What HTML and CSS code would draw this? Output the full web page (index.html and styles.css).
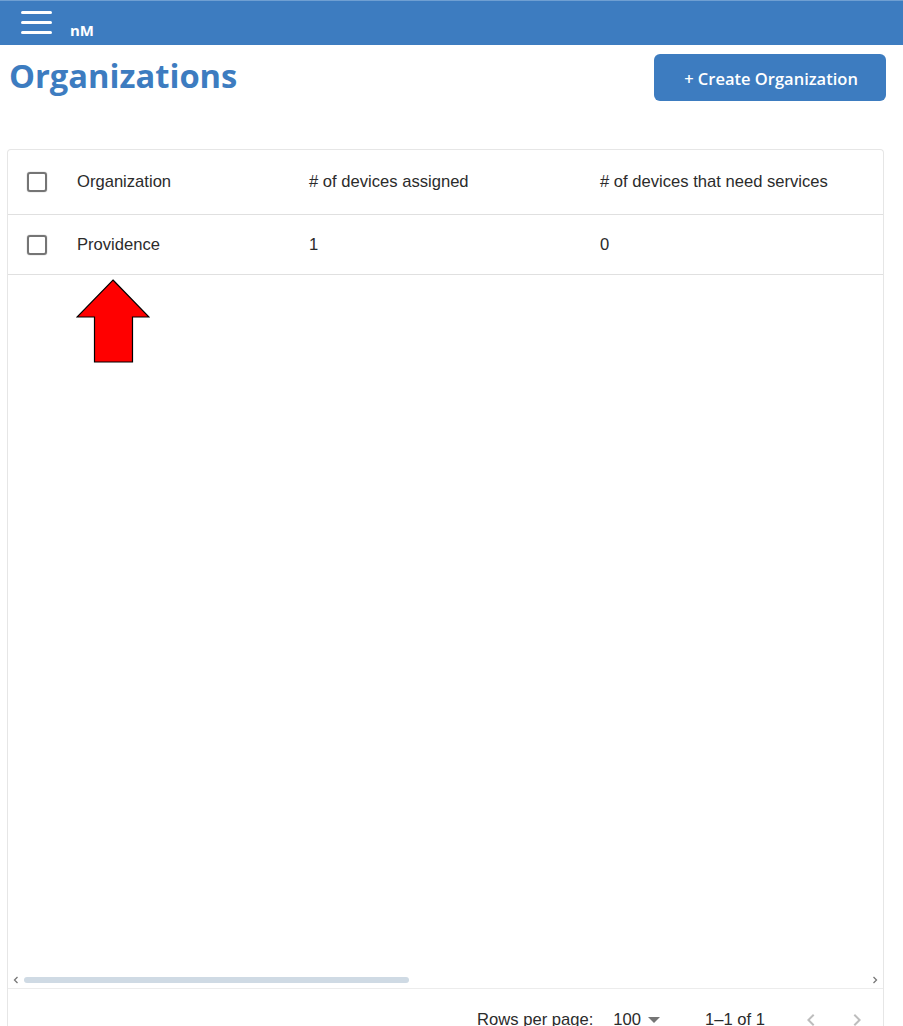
FILE: index.html
```html
<!DOCTYPE html>
<html lang="en">
<head>
  <meta charset="UTF-8" />
  <meta name="viewport" content="width=device-width, initial-scale=1.0"/>
  <title>Organizations</title>
  <link rel="stylesheet" href="styles.css">
</head>
<body>

  <!-- Top bar -->
  <header class="topbar">
    <div class="menu-icon">
      <span></span>
      <span></span>
      <span></span>
    </div>
    <div class="brand">nM</div>
  </header>

  <!-- Title row -->
  <div class="title-row">
    <h1>Organizations</h1>
    <button class="btn">+ Create Organization</button>
  </div>

  <!-- Table -->
  <div class="grid-card">
    <div class="row head-row">
      <div class="cell check-cell"><span class="checkbox"></span></div>
      <div class="cell org-cell">Organization</div>
      <div class="cell assigned-cell"># of devices assigned</div>
      <div class="cell services-cell"># of devices that need services</div>
    </div>
    <div class="row body-row">
      <div class="cell check-cell"><span class="checkbox"></span></div>
      <div class="cell org-cell">Providence</div>
      <div class="cell assigned-cell">1</div>
      <div class="cell services-cell">0</div>
    </div>

    <div class="grid-space"></div>

    <div class="scrollbar">
      <svg class="scroll-arrow" viewBox="0 0 6 8"><path d="M4.5 1 1.5 4l3 3"/></svg>
      <div class="scroll-track"><div class="scroll-thumb"></div></div>
      <svg class="scroll-arrow" viewBox="0 0 6 8"><path d="M1.5 1l3 3-3 3"/></svg>
    </div>

    <div class="pager">
      <span class="rows-label">Rows per page:</span>
      <span class="rows-value">100</span>
      <span class="caret"></span>
      <span class="range">1–1 of 1</span>
      <svg class="page-arrow first" viewBox="0 0 24 24"><path d="M15.41 7.41 14 6l-6 6 6 6 1.41-1.41L10.83 12z"/></svg>
      <svg class="page-arrow" viewBox="0 0 24 24"><path d="M10 6 8.59 7.41 13.17 12l-4.58 4.59L10 18l6-6z"/></svg>
    </div>
  </div>

  <!-- Red arrow annotation -->
  <svg class="red-arrow" viewBox="0 0 74 84">
    <polygon points="37,1 73,38 56.5,38 56.5,83 18.5,83 18.5,38 1,38" fill="#ff0000" stroke="#000" stroke-width="1.2"/>
  </svg>

</body>
</html>
```

FILE: styles.css
```css
body {
  margin: 0;
  padding: 0;
  height: 1026px;
  overflow: hidden;
  background: #fff;
  font-family: "Liberation Sans", Arial, sans-serif;
  color: #2b2b2b;
  position: relative;
}

.topbar {
  height: 44px;
  background: #3d7cc0;
  border-top: 1px solid #6f9fd2;
  display: flex;
  padding-left: 21px;
}

.menu-icon {
  width: 31px;
  padding-top: 10px;
  display: flex;
  flex-direction: column;
  gap: 7px;
}

.menu-icon span {
  display: block;
  height: 3px;
  background: #fff;
  border-radius: 2px;
}

.brand {
  margin-left: 18px;
  padding-top: 20px;
  font-family: "Open Sans", sans-serif;
  font-size: 15px;
  line-height: 18px;
  font-weight: 700;
  color: #fff;
}

.title-row {
  height: 104px;
  box-sizing: border-box;
  padding: 9px 17px 0 9px;
  display: flex;
  justify-content: space-between;
  align-items: flex-start;
}

h1 {
  margin: 0;
  font-family: "Open Sans", sans-serif;
  font-size: 32.7px;
  line-height: 44px;
  font-weight: 700;
  color: #3d7cc0;
}

.btn {
  width: 232px;
  height: 47px;
  padding: 2px 0 0 2px;
  background-color: #3d7cc0;
  color: #fff;
  border: none;
  border-radius: 6px;
  font-family: "Open Sans", sans-serif;
  font-size: 16.5px;
  font-weight: 600;
  cursor: pointer;
}

.grid-card {
  margin-left: 7px;
  width: 875px;
  height: 882px;
  border: 1px solid #e6e6e6;
  border-bottom: none;
  border-radius: 4px 4px 0 0;
  display: flex;
  flex-direction: column;
  font-size: 16.6px;
}

.row {
  display: flex;
  align-items: center;
  border-bottom: 1px solid #e0e0e0;
  flex-shrink: 0;
}

.head-row {
  height: 64px;
}

.body-row {
  height: 59px;
}

.cell {
  white-space: nowrap;
}

.check-cell {
  width: 69px;
  padding-left: 19px;
  box-sizing: border-box;
  display: flex;
}

.checkbox {
  width: 16px;
  height: 16px;
  border: 2px solid #757575;
  border-radius: 3px;
  box-shadow: 0 0 1px #757575;
}

.org-cell {
  width: 232px;
}

.assigned-cell {
  width: 291px;
}

.grid-space {
  flex: 1;
}

.scrollbar {
  height: 17px;
  display: flex;
  align-items: center;
  padding: 0 5px;
  border-bottom: 1px solid #ececec;
  flex-shrink: 0;
}

.scroll-arrow {
  width: 6px;
  height: 8px;
  fill: none;
  stroke: #777;
  stroke-width: 1.3;
}

.scroll-track {
  flex: 1;
  padding-left: 5px;
}

.scroll-thumb {
  width: 385px;
  height: 6px;
  background: #cfdae4;
  border-radius: 3px;
}

.pager {
  padding: 19px 14px 0 0;
  display: flex;
  justify-content: flex-end;
  align-items: center;
  line-height: 16px;
}

.rows-value {
  margin-left: 20px;
}

.caret {
  width: 0;
  height: 0;
  margin-left: 7px;
  border-left: 6px solid transparent;
  border-right: 6px solid transparent;
  border-top: 6px solid #757575;
}

.range {
  margin-left: 45px;
}

.page-arrow {
  width: 24px;
  height: 24px;
  margin-left: 22px;
  fill: #bdbdbd;
}

.page-arrow.first {
  margin-left: 34px;
}

.red-arrow {
  position: absolute;
  left: 76px;
  top: 279px;
  width: 74px;
  height: 84px;
}
```
